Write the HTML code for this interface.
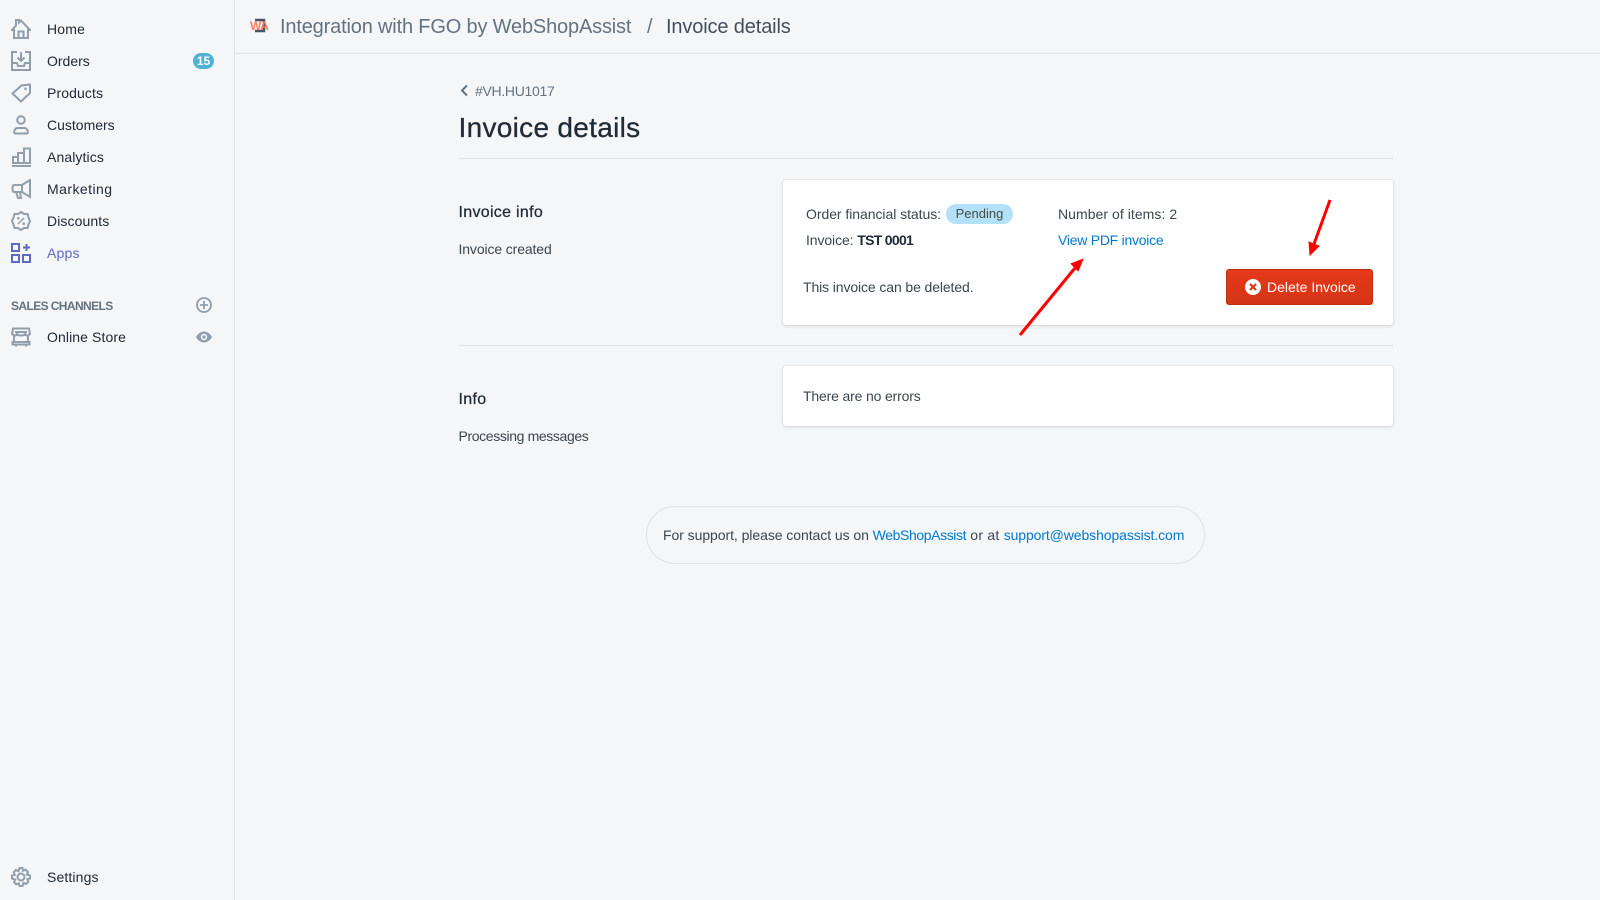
<!DOCTYPE html>
<html lang="en">
<head>
<meta charset="utf-8">
<title>Invoice details</title>
<style>
html,body{margin:0;padding:0;width:1600px;height:900px;overflow:hidden;background:#f4f6f8;}
body{position:relative;font-family:"Liberation Sans",sans-serif;color:#212b36;font-size:14px;}
.t{position:absolute;white-space:nowrap;line-height:20px;height:20px;}
.b{position:absolute;}
.nav{font-size:14px;color:#212b36;left:47px;}
svg.i{position:absolute;left:11px;width:20px;height:20px;fill:none;stroke:#919eab;stroke-width:2;}
a{color:#007ace;text-decoration:none;}
.card{position:absolute;background:#fff;border-radius:3px;box-shadow:0 0 0 1px rgba(63,63,68,.05),0 1px 3px 0 rgba(63,63,68,.15);}
.c{font-size:14px;color:#3c4650;}
</style>
</head>
<body>
<!-- Sidebar -->
<div class="b" style="left:0;top:0;width:234px;height:900px;border-right:1px solid #dfe3e8;"></div>
<svg class="i" style="top:19px" viewBox="0 0 20 20"><path d="M3 19V11H1L5 6.500V1H8V3.500L10 1.500L19 11H17V19H3ZM7.500 19V12.500H12.500V19"/></svg>
<div class="t nav" style="top:19px;letter-spacing:.2px">Home</div>
<svg class="i" style="top:51px" viewBox="0 0 20 20"><path d="M6 1H1V19H19V1H14M10 1V9M6.500 6.500L10 10L13.500 6.500M1 12H6L7 15H13L14 12H19"/></svg>
<div class="t nav" style="top:51px">Orders</div>
<div class="b" style="left:193px;top:53px;width:21px;height:16px;border-radius:8px;background:#4fb1d3;color:#fff;font-size:12px;font-weight:bold;line-height:16px;text-align:center;">15</div>
<svg class="i" style="top:83px" viewBox="0 0 20 20"><path d="M1.500 10.500L10.500 2.500L19 1.500V10L10 18.500Z"/><path stroke-width="2.500" stroke-linecap="round" d="M14.500 5.800V5.900"/></svg>
<div class="t nav" style="top:83px;letter-spacing:.1px">Products</div>
<svg class="i" style="top:115px" viewBox="0 0 20 20"><circle cx="10" cy="5" r="3.800"/><path d="M4 18.500C2.500 18.500 3 14 6 13H14C17 14 17.500 18.500 16 18.500Z"/></svg>
<div class="t nav" style="top:115px">Customers</div>
<svg class="i" style="top:147px" viewBox="0 0 20 20"><path d="M1 19H20M2 16V10H7V16M7 16V6H13V16M13 16V1.500H19V16M1 16H20"/></svg>
<div class="t nav" style="top:147px;letter-spacing:.1px">Analytics</div>
<svg class="i" style="top:179px" viewBox="0 0 20 20"><path d="M19 1L11 6H3C1 6 1 13 3 13H11L19 18ZM11 6V13M5 13L7 19H10L9 13"/></svg>
<div class="t nav" style="top:179px;letter-spacing:.45px">Marketing</div>
<svg class="i" style="top:211px" viewBox="0 0 20 20"><path d="M10 1L13 3H16.500L17.500 6.500L19 10L17.500 13.500L16.500 17H13L10 19L7 17H3.500L2.500 13.500L1 10L2.500 6.500L3.500 3H7Z"/><path stroke-width="1.500" d="M13 7L7 13"/><circle cx="7.300" cy="7.300" r="1.300" fill="#919eab" stroke="none"/><circle cx="12.700" cy="12.700" r="1.300" fill="#919eab" stroke="none"/></svg>
<div class="t nav" style="top:211px;letter-spacing:.1px">Discounts</div>
<svg class="i" style="top:243px;stroke:#5c6ac4" viewBox="0 0 20 20"><path d="M1 1H8V8H1ZM1 12H8V19H1ZM12 12H19V19H12ZM15.500 1V8M12 4.500H19"/></svg>
<div class="t nav" style="top:243px;color:#5c6ac4;letter-spacing:.2px">Apps</div>
<div class="t" style="left:11px;top:296px;font-size:12px;font-weight:bold;color:#637381;letter-spacing:-.6px;">SALES CHANNELS</div>
<svg class="i" style="left:196px;top:297px;width:16px;height:16px;stroke-width:1.800" viewBox="0 0 16 16"><circle cx="8" cy="8" r="7"/><path d="M8 4V12M4 8H12"/></svg>
<svg class="i" style="top:327px" viewBox="0 0 20 20"><path d="M2 1.500H18L19 7C17 9 15 9 14 7C13 9 7 9 6 7C5 9 3 9 1 7ZM3 9V15H17V9M1.500 15H18.500V17.500H1.500ZM5 17.500V19.500M15 17.500V19.500M4 5H16"/></svg>
<div class="t nav" style="top:327px;letter-spacing:.1px">Online Store</div>
<svg class="i" style="left:196px;top:329px;width:16px;height:16px;stroke:none;fill:#919eab" viewBox="0 0 16 16"><path fill-rule="evenodd" d="M8 2.500C12 2.500 15 6 16 8C15 10 12 13.500 8 13.500C4 13.500 1 10 0 8C1 6 4 2.500 8 2.500ZM8 4.800A3.200 3.200 0 1 0 8 11.200A3.200 3.200 0 1 0 8 4.800Z"/><circle cx="8" cy="8" r="1.600"/></svg>
<svg class="i" style="top:867px" viewBox="0 0 20 20"><circle cx="10" cy="10" r="3.500"/><path d="M8.500 1H11.500L12 3.700L14.500 2.700L17 5L15.800 7.500L19 8.500V11.500L16.300 12.200L17.300 14.800L15 17L12.500 15.800L11.500 19H8.500L7.800 16.300L5.200 17.300L3 15L4.200 12.500L1 11.500V8.500L3.700 7.800L2.700 5.200L5 3L7.500 4.200Z"/></svg>
<div class="t nav" style="top:867px;letter-spacing:.13px">Settings</div>

<!-- Top bar -->
<div class="b" style="left:235px;top:53px;width:1365px;height:1px;background:#dfe3e8;"></div>
<svg class="b" style="left:251px;top:18px;width:17px;height:16px" viewBox="0 0 17 16"><path d="M4 2H13V13H4" fill="none" stroke="#4a5560" stroke-width="2.500"/></svg>
<div class="t" style="left:250px;top:16px;font-size:12px;font-weight:bold;color:#f9805c;letter-spacing:-.6px;">WA</div>
<div class="t" style="left:280px;top:17px;font-size:20px;color:#637381;letter-spacing:-.17px;">Integration with FGO by WebShopAssist</div>
<div class="t" style="left:647px;top:17px;font-size:20px;color:#637381;">/</div>
<div class="t" style="left:666px;top:17px;font-size:20px;color:#454f5b;letter-spacing:-.14px;">Invoice details</div>

<!-- Heading -->
<svg class="b" style="left:460px;top:84px;width:9px;height:13px" viewBox="0 0 9 13"><path d="M7 1.500L2 6.500L7 11.500" fill="none" stroke="#637381" stroke-width="2"/></svg>
<div class="t" style="left:475px;top:81px;font-size:14px;color:#637381;letter-spacing:-.3px;">#VH.HU1017</div>
<div class="t" style="left:458.500px;top:112px;height:32px;line-height:32px;font-size:28px;color:#212b36;letter-spacing:.3px;-webkit-text-stroke:.3px #212b36;">Invoice details</div>
<div class="b" style="left:459px;top:158px;width:934px;height:1px;background:#dfe3e8;"></div>

<!-- Section 1 -->
<div class="t" style="left:458.500px;top:203px;font-size:16px;color:#212b36;letter-spacing:.3px;-webkit-text-stroke:.25px #212b36;">Invoice info</div>
<div class="t c" style="left:458.500px;top:239px;letter-spacing:-.12px;">Invoice created</div>
<div class="card" style="left:783px;top:180px;width:610px;height:145px;"></div>
<div class="t c" style="left:806px;top:204px;letter-spacing:-.05px;">Order financial status:</div>
<div class="b" style="left:946px;top:204px;width:67px;height:20px;border-radius:10px;background:#b4e1fa;color:#414f3e;font-size:13px;line-height:20px;text-align:center;">Pending</div>
<div class="t c" style="left:1058px;top:204px;letter-spacing:.05px;">Number of items: 2</div>
<div class="t c" style="left:806px;top:230px;letter-spacing:-.1px;">Invoice: <b style="color:#212b36;letter-spacing:-.7px;">TST 0001</b></div>
<div class="t c" style="left:1058px;top:230px;letter-spacing:-.25px;"><a href="#">View PDF invoice</a></div>
<div class="t c" style="left:803px;top:277px;letter-spacing:-.11px;">This invoice can be deleted.</div>
<div class="b" style="left:1226px;top:269px;width:147px;height:36px;box-sizing:border-box;border:1px solid #bf3013;border-radius:3px;background:linear-gradient(#e6391a,#d53417);"></div>
<svg class="b" style="left:1245px;top:279px;width:16px;height:16px" viewBox="0 0 16 16"><circle cx="8" cy="8" r="8" fill="#fff"/><path d="M5 5L11 11M11 5L5 11" stroke="#dd3618" stroke-width="2.200"/></svg>
<div class="t" style="left:1267px;top:277px;font-size:14px;color:#fff;">Delete Invoice</div>

<div class="b" style="left:459px;top:345px;width:934px;height:1px;background:#dfe3e8;"></div>

<!-- Section 2 -->
<div class="t" style="left:458.500px;top:390px;font-size:16px;color:#212b36;letter-spacing:.3px;-webkit-text-stroke:.25px #212b36;">Info</div>
<div class="t c" style="left:458.500px;top:426px;letter-spacing:-.37px;">Processing messages</div>
<div class="card" style="left:783px;top:366px;width:610px;height:60px;"></div>
<div class="t c" style="left:803px;top:386px;letter-spacing:-.16px;">There are no errors</div>

<!-- Support -->
<div class="b" style="left:646px;top:506px;width:557px;height:56px;border:1px solid #dfe3e8;border-radius:29px;"></div>
<div class="t c" style="left:663px;top:525px;letter-spacing:-.06px;">For support, please contact us on <a href="#" style="letter-spacing:-.39px">WebShopAssist</a><span style="letter-spacing:.25px"> or at </span><a href="#" style="letter-spacing:-.1px">support@webshopassist.com</a></div>

<!-- Arrows -->
<svg class="b" style="left:0;top:0;width:1600px;height:900px;pointer-events:none" viewBox="0 0 1600 900">
<path d="M1020 335L1075 268" stroke="#f00" stroke-width="3" fill="none"/>
<path d="M1082 260L1072 264L1078 270Z" fill="#f00" stroke="#f00" stroke-width="2"/>
<path d="M1330 200L1314 244" stroke="#f00" stroke-width="3" fill="none"/>
<path d="M1310 255L1309 242L1319 246Z" fill="#f00" stroke="#f00" stroke-width="1"/>
</svg>
</body>
</html>
